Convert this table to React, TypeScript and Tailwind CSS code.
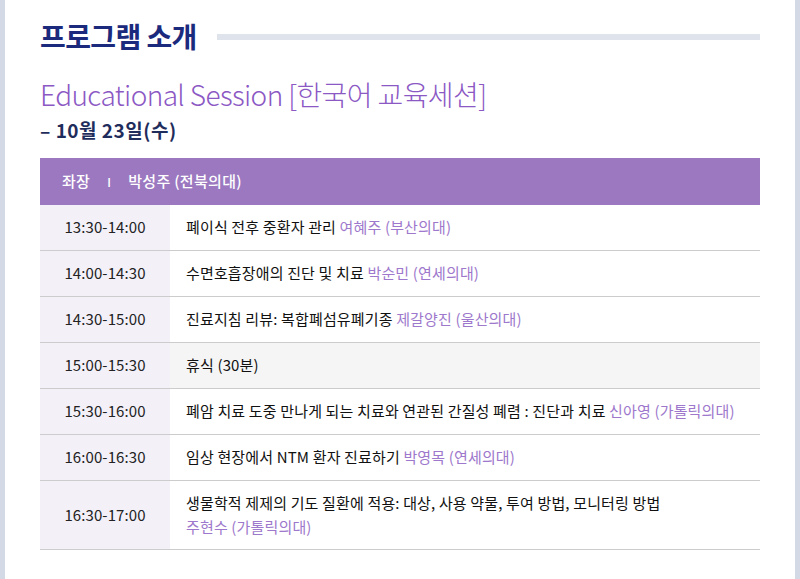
const font = { fontFamily: '"Noto Sans CJK KR", "Noto Sans", sans-serif' };

interface Session {
  time: string;
  title: string;
  speaker?: string;
  breakRow?: boolean;
  wrap?: boolean;
}

const SESSIONS: Session[] = [
  { time: "13:30-14:00", title: "폐이식 전후 중환자 관리", speaker: "여혜주 (부산의대)" },
  { time: "14:00-14:30", title: "수면호흡장애의 진단 및 치료", speaker: "박순민 (연세의대)" },
  { time: "14:30-15:00", title: "진료지침 리뷰: 복합폐섬유폐기종", speaker: "제갈양진 (울산의대)" },
  { time: "15:00-15:30", title: "휴식 (30분)", breakRow: true },
  {
    time: "15:30-16:00",
    title: "폐암 치료 도중 만나게 되는 치료와 연관된 간질성 폐렴 : 진단과 치료",
    speaker: "신아영 (가톨릭의대)",
  },
  { time: "16:00-16:30", title: "임상 현장에서 NTM 환자 진료하기", speaker: "박영목 (연세의대)" },
  {
    time: "16:30-17:00",
    title: "생물학적 제제의 기도 질환에 적용: 대상, 사용 약물, 투여 방법, 모니터링 방법",
    speaker: "주현수 (가톨릭의대)",
    wrap: true,
  },
];

function Row({ s }: { s: Session }) {
  return (
    <div className="flex border-b border-[#cccccc]">
      <div className="w-[130px] shrink-0 bg-[#f3f0f8] flex items-center justify-center text-[15px] text-[#222] tracking-[0.1px]">
        {s.time}
      </div>
      <div
        className={
          "flex-1 pl-4 pr-4 text-[15px] text-[#111] tracking-[0.15px] " +
          (s.breakRow ? "bg-[#f5f5f5] " : "bg-white ") +
          (s.wrap ? "py-[10px] leading-[24px]" : "h-[45px] flex items-center")
        }
      >
        {s.wrap ? (
          <>
            <div>{s.title}</div>
            <div className="text-[#9d78cc]">{s.speaker}</div>
          </>
        ) : (
          <span>
            {s.title}
            {s.speaker && <span className="text-[#9d78cc]"> {s.speaker}</span>}
          </span>
        )}
      </div>
    </div>
  );
}

export default function App() {
  return (
    <div className="w-[800px] h-[579px] flex bg-white overflow-hidden" style={font}>
      <div className="w-[5px] bg-[#d4dae5]" />
      <div className="flex-1 px-[35px] pt-[18px]">
        <div className="flex items-center gap-[20px]">
          <h2 className="text-[28px] font-bold text-[#1b2a7c] tracking-[-0.6px] leading-[36px]">
            프로그램 소개
          </h2>
          <div className="flex-1 h-[6px] bg-[#dfe4ec] mt-[2px]" />
        </div>
        <h3 className="mt-[22px] text-[28px] font-light text-[#8b58c4] tracking-[-0.6px] leading-[36px]">
          Educational Session [한국어 교육세션]
        </h3>
        <p className="mt-[5px] text-[19px] font-bold text-[#1f2d5c] tracking-[0.5px] leading-[26px]">
          – 10월 23일(수)
        </p>
        <div className="mt-[15px]">
          <div className="h-[47px] bg-[#9b78c0] flex items-center pl-[22px] text-[15px] font-medium text-white tracking-[0.3px]">
            <span>좌장</span>
            <span className="mx-[17px] text-[12px]">I</span>
            <span>박성주 (전북의대)</span>
          </div>
          {SESSIONS.map((s) => (
            <Row key={s.time} s={s} />
          ))}
        </div>
      </div>
      <div className="w-[5px] bg-[#d4dae5]" />
    </div>
  );
}
